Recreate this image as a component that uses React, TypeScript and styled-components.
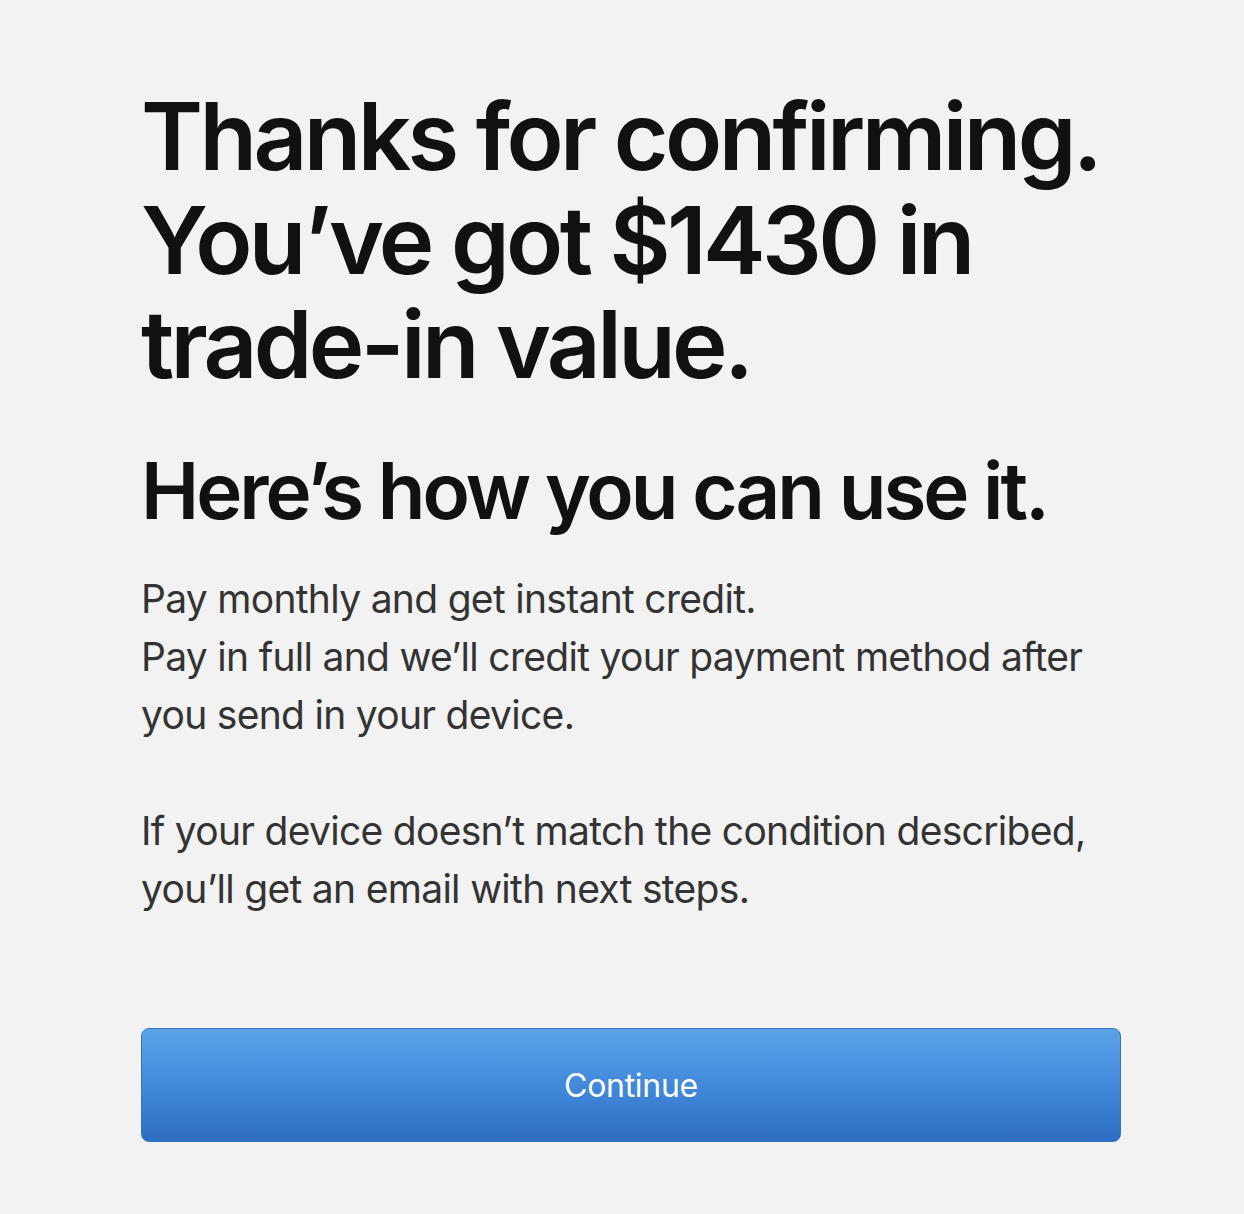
import styled, { createGlobalStyle } from "styled-components";

const GlobalStyle = createGlobalStyle`
  html, body {
    margin: 0;
    padding: 0;
    background: #f2f2f2;
  }
  body {
    font-family: Inter, "Noto Sans", "Liberation Sans", sans-serif;
    -webkit-font-smoothing: antialiased;
  }
`;

const Page = styled.main`
  min-height: 1214px;
  box-sizing: border-box;
  padding: 84px 0 0 141px;
  width: 1121px;
  display: flex;
  flex-direction: column;
`;

const Title = styled.h1`
  margin: 0;
  font-size: 94px;
  line-height: 104px;
  font-weight: 600;
  letter-spacing: -3.6px;
  white-space: nowrap;
  color: #111111;
`;

const Subtitle = styled.h2`
  margin: 50px 0 0;
  font-size: 78px;
  line-height: 90px;
  font-weight: 600;
  letter-spacing: -3px;
  white-space: nowrap;
  color: #111111;
`;

const Copy = styled.div`
  margin-top: 34px;
  display: flex;
  flex-direction: column;
  gap: 58px;
`;

const Para = styled.p`
  margin: 0;
  font-size: 39px;
  line-height: 58px;
  font-weight: 400;
  letter-spacing: -0.7px;
  white-space: nowrap;
  color: #333333;
`;

const Button = styled.button`
  margin-top: 110px;
  height: 114px;
  width: 980px;
  border: 1px solid #2f72c6;
  border-radius: 8px;
  background: linear-gradient(to bottom, #5aa3e8 0%, #4289da 50%, #2d6ec3 100%);
  color: #ffffff;
  font-family: inherit;
  font-size: 32px;
  font-weight: 400;
  letter-spacing: -0.3px;
  cursor: pointer;
`;

export default function App() {
  return (
    <>
      <GlobalStyle />
      <Page>
        <Title>
          Thanks for confirming.
          <br />
          You’ve got $1430 in
          <br />
          trade-in value.
        </Title>
        <Subtitle>Here’s how you can use it.</Subtitle>
        <Copy>
          <Para>
            Pay monthly and get instant credit.
            <br />
            Pay in full and we’ll credit your payment method after
            <br />
            you send in your device.
          </Para>
          <Para>
            If your device doesn’t match the condition described,
            <br />
            you’ll get an email with next steps.
          </Para>
        </Copy>
        <Button>Continue</Button>
      </Page>
    </>
  );
}
